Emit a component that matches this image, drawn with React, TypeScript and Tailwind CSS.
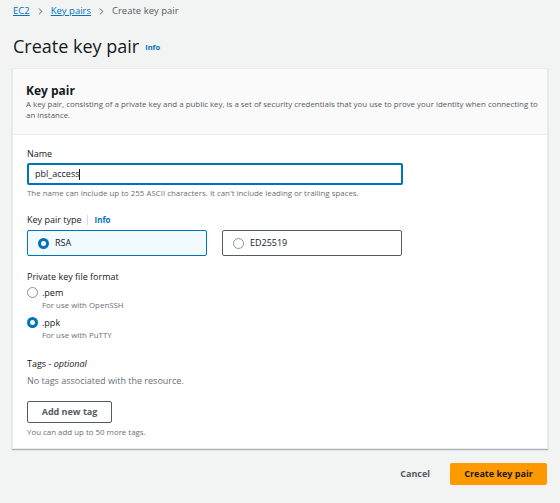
import { ChevronRight } from 'lucide-react';

const font = { fontFamily: '"Open Sans", "Noto Sans", Arial, sans-serif' };

const Radio = ({ checked }: { checked: boolean }) =>
    checked ? (
        <span className="inline-block w-[11px] h-[11px] rounded-full border-[3px] border-[#0073bb] bg-white shrink-0" />
    ) : (
        <span className="inline-block w-[11px] h-[11px] rounded-full border border-[#879596] bg-white shrink-0" />
    );

export default function App() {
    return (
        <div style={font} className="w-[560px] h-[503px] bg-[#f2f3f3] text-[#16191f] overflow-hidden">
            <nav className="flex items-center gap-[5px] px-[13px] pt-[2px] h-[20px] text-[9.5px]">
                <a className="text-[#0073bb] underline">EC2</a>
                <ChevronRight className="w-[11px] h-[11px] text-[#545b64]" strokeWidth={2} />
                <a className="text-[#0073bb] underline">Key pairs</a>
                <ChevronRight className="w-[11px] h-[11px] text-[#545b64]" strokeWidth={2} />
                <span className="text-[#545b64]">Create key pair</span>
            </nav>

            <div className="flex items-end gap-[6px] px-[13px] mt-[12px] h-[26px]">
                <h1 className="text-[18px] leading-[24px]">Create key pair</h1>
                <span className="text-[#0073bb] text-[7.5px] font-bold mb-[5px]">Info</span>
            </div>

            <div className="mx-[12px] mt-[10px] bg-white border border-[#eaeded] shadow-[0_1px_1px_rgba(0,28,36,0.3)]">
                <div className="bg-[#fafafa] border-b border-[#eaeded] px-[13px] pt-[14px] h-[66px]">
                    <h2 className="text-[12px] font-bold leading-[16px]">Key pair</h2>
                    <p className="text-[7.9px] leading-[11px] text-[#545b64] whitespace-nowrap">
                        A key pair, consisting of a private key and a public key, is a set of security credentials that you use to prove your identity when connecting to
                        <br />
                        an instance.
                    </p>
                </div>

                <div className="px-[14px] pt-[12px] pb-[10px]">
                    <label className="block text-[9px] leading-[14px]">Name</label>
                    <div className="mt-[2px] w-[376px] h-[22px] border-2 border-[#0073bb] rounded-[2px] flex items-center px-[6px] text-[9px]">
                        pbl_access<span className="inline-block w-[1px] h-[11px] bg-[#16191f]" />
                    </div>
                    <p className="text-[7.9px] leading-[12px] mt-[2px] text-[#687078]">
                        The name can include up to 255 ASCII characters. It can't include leading or trailing spaces.
                    </p>

                    <div className="mt-[14px] flex items-center text-[9px] leading-[14px]">
                        <span>Key pair type</span>
                        <span className="mx-[6px] w-[1px] h-[10px] bg-[#d5dbdb]" />
                        <span className="text-[#0073bb] font-bold text-[8px]">Info</span>
                    </div>
                    <div className="mt-[3px] flex gap-[15px]">
                        <div className="w-[180px] h-[26px] border border-[#0073bb] bg-[#f1faff] rounded-[2px] flex items-center gap-[6px] px-[10px] text-[9px]">
                            <Radio checked />
                            <span>RSA</span>
                        </div>
                        <div className="w-[180px] h-[26px] border border-[#545b64] bg-white rounded-[2px] flex items-center gap-[6px] px-[10px] text-[9px]">
                            <Radio checked={false} />
                            <span>ED25519</span>
                        </div>
                    </div>

                    <label className="block mt-[14px] text-[9px] leading-[14px]">Private key file format</label>
                    <div className="mt-[2px] flex flex-col gap-[4px]">
                        <div>
                            <div className="flex items-center gap-[4px] text-[9px] leading-[13px]">
                                <Radio checked={false} />
                                <span>.pem</span>
                            </div>
                            <p className="pl-[15px] text-[7.9px] leading-[13px] text-[#687078]">For use with OpenSSH</p>
                        </div>
                        <div>
                            <div className="flex items-center gap-[4px] text-[9px] leading-[13px]">
                                <Radio checked />
                                <span>.ppk</span>
                            </div>
                            <p className="pl-[15px] text-[7.9px] leading-[13px] text-[#687078]">For use with PuTTY</p>
                        </div>
                    </div>

                    <div className="mt-[15px] text-[9px] leading-[14px]">
                        Tags - <i>optional</i>
                    </div>
                    <p className="mt-[3px] text-[9px] leading-[13px] text-[#687078]">No tags associated with the resource.</p>
                    <button className="mt-[14px] w-[85px] h-[22px] border border-[#545b64] rounded-[2px] bg-white text-[9px] font-bold text-[#545b64]">
                        Add new tag
                    </button>
                    <p className="mt-[3px] text-[7.9px] leading-[12px] text-[#687078]">You can add up to 50 more tags.</p>
                </div>
            </div>

            <div className="flex justify-end items-center gap-[20px] px-[13px] mt-[14px]">
                <button className="text-[9px] font-bold text-[#545b64]">Cancel</button>
                <button className="w-[97px] h-[22px] bg-[#ff9900] rounded-[2px] text-[9px] font-bold text-[#16191f]">
                    Create key pair
                </button>
            </div>
        </div>
    );
}
